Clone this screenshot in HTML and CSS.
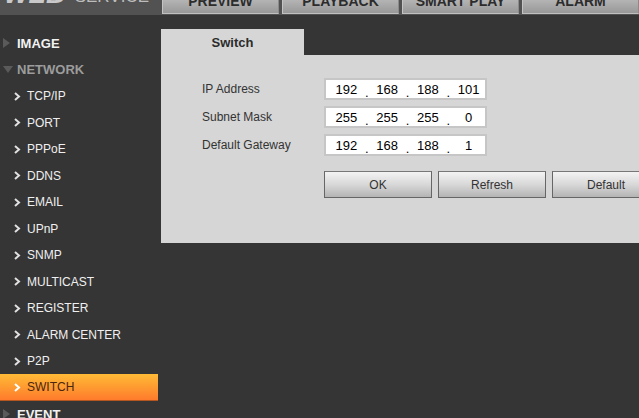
FILE: index.html
```html
<!DOCTYPE html>
<html lang="en">
<head>
    <meta charset="UTF-8">
    <title>WEB SERVICE - Switch</title>
    <link rel="stylesheet" href="styles.css">
</head>
<body>
    <div class="topbar">
        <div class="logo">
            <span class="logo-web">WEB</span>
            <span class="logo-service">SERVICE</span>
        </div>
        <div class="tabs">
            <div class="tab"><span>PREVIEW</span></div>
            <div class="tab"><span>PLAYBACK</span></div>
            <div class="tab"><span>SMART PLAY</span></div>
            <div class="tab"><span>ALARM</span></div>
        </div>
    </div>

    <div class="main">
        <div class="sidebar">
            <div class="menu-head"><span class="arrow-right"></span>IMAGE</div>
            <div class="menu-head open"><span class="arrow-down"></span>NETWORK</div>
            <div class="menu-item"><svg class="chev" width="13" height="10" viewBox="0 0 13 10"><polyline points="1,1 5,4.5 1,8" /></svg>TCP/IP</div>
            <div class="menu-item"><svg class="chev" width="13" height="10" viewBox="0 0 13 10"><polyline points="1,1 5,4.5 1,8" /></svg>PORT</div>
            <div class="menu-item"><svg class="chev" width="13" height="10" viewBox="0 0 13 10"><polyline points="1,1 5,4.5 1,8" /></svg>PPPoE</div>
            <div class="menu-item"><svg class="chev" width="13" height="10" viewBox="0 0 13 10"><polyline points="1,1 5,4.5 1,8" /></svg>DDNS</div>
            <div class="menu-item"><svg class="chev" width="13" height="10" viewBox="0 0 13 10"><polyline points="1,1 5,4.5 1,8" /></svg>EMAIL</div>
            <div class="menu-item"><svg class="chev" width="13" height="10" viewBox="0 0 13 10"><polyline points="1,1 5,4.5 1,8" /></svg>UPnP</div>
            <div class="menu-item"><svg class="chev" width="13" height="10" viewBox="0 0 13 10"><polyline points="1,1 5,4.5 1,8" /></svg>SNMP</div>
            <div class="menu-item"><svg class="chev" width="13" height="10" viewBox="0 0 13 10"><polyline points="1,1 5,4.5 1,8" /></svg>MULTICAST</div>
            <div class="menu-item"><svg class="chev" width="13" height="10" viewBox="0 0 13 10"><polyline points="1,1 5,4.5 1,8" /></svg>REGISTER</div>
            <div class="menu-item"><svg class="chev" width="13" height="10" viewBox="0 0 13 10"><polyline points="1,1 5,4.5 1,8" /></svg>ALARM CENTER</div>
            <div class="menu-item"><svg class="chev" width="13" height="10" viewBox="0 0 13 10"><polyline points="1,1 5,4.5 1,8" /></svg>P2P</div>
            <div class="menu-item active"><svg class="chev" width="13" height="10" viewBox="0 0 13 10"><polyline points="1,1 5,4.5 1,8" /></svg>SWITCH</div>
            <div class="menu-head"><span class="arrow-right"></span>EVENT</div>
        </div>

        <div class="panel">
            <div class="panel-tabs">
                <div class="panel-tab">Switch</div>
            </div>
            <div class="panel-body">
                <div class="form-row">
                    <label>IP Address</label>
                    <div class="ip-box">
                        <span class="seg">192</span><span class="dot">.</span><span class="seg">168</span><span class="dot">.</span><span class="seg">188</span><span class="dot">.</span><span class="seg">101</span>
                    </div>
                </div>
                <div class="form-row">
                    <label>Subnet Mask</label>
                    <div class="ip-box">
                        <span class="seg">255</span><span class="dot">.</span><span class="seg">255</span><span class="dot">.</span><span class="seg">255</span><span class="dot">.</span><span class="seg">0</span>
                    </div>
                </div>
                <div class="form-row">
                    <label>Default Gateway</label>
                    <div class="ip-box">
                        <span class="seg">192</span><span class="dot">.</span><span class="seg">168</span><span class="dot">.</span><span class="seg">188</span><span class="dot">.</span><span class="seg">1</span>
                    </div>
                </div>
                <div class="buttons">
                    <button class="btn">OK</button>
                    <button class="btn">Refresh</button>
                    <button class="btn">Default</button>
                </div>
            </div>
        </div>
    </div>
</body>
</html>
```

FILE: styles.css
```css
* {
    margin: 0;
    padding: 0;
    box-sizing: border-box;
}

html, body {
    overflow: hidden;
}

body {
    font-family: "Liberation Sans", Arial, sans-serif;
    background: #353535;
    width: 639px;
    height: 418px;
}

/* top bar (scrolled so only the lower part shows) */
.topbar {
    height: 15px;
    background: #525252;
    display: flex;
    overflow: hidden;
}

.logo {
    width: 162px;
    flex-shrink: 0;
    display: flex;
    align-items: flex-end;
    gap: 10px;
    padding-left: 4px;
    margin-top: -19px;
    height: 26px;
}

.logo-web {
    font-size: 26px;
    font-weight: bold;
    font-style: italic;
    color: #c9c9c9;
    letter-spacing: 0;
    line-height: 25px;
}

.logo-service {
    font-size: 17px;
    color: #bdbdbd;
    line-height: 21px;
}

.tabs {
    display: flex;
    gap: 3px;
    height: 14px;
}

.tab {
    width: 117px;
    height: 14px;
    background: linear-gradient(#b4b4b4, #989898);
    border-left: 1px solid #c4c4c4;
    border-right: 1px solid #8a8a8a;
    border-bottom: 1px solid #c0c0c0;
    color: #2c2c2c;
    font-size: 14px;
    font-weight: bold;
    text-align: center;
    overflow: hidden;
}

.tab span {
    display: block;
    line-height: 14px;
    margin-top: -6px;
}

/* layout */
.main {
    display: flex;
}

.sidebar {
    width: 161px;
    flex-shrink: 0;
    padding-top: 14.75px;
}

.menu-head, .menu-item {
    height: 26.5px;
    display: flex;
    align-items: center;
    width: 158px;
}

.menu-head {
    font-size: 13px;
    font-weight: bold;
    color: #f2f2f2;
    padding-left: 3px;
}

.menu-head.open {
    color: #9c9c9c;
}

.arrow-right {
    width: 0;
    height: 0;
    border-top: 5px solid transparent;
    border-bottom: 5px solid transparent;
    border-left: 7px solid #5a5a5a;
    margin-right: 7px;
}

.arrow-down {
    width: 0;
    height: 0;
    border-left: 5px solid transparent;
    border-right: 5px solid transparent;
    border-top: 7px solid #5a5a5a;
    margin-right: 4px;
}

.menu-item {
    font-size: 12px;
    color: #f0f0f0;
    padding-left: 14px;
}

.chev {
    flex-shrink: 0;
    margin-top: 1px;
}

.chev polyline {
    fill: none;
    stroke: #e0e0e0;
    stroke-width: 2;
}

.menu-item.active {
    background: linear-gradient(#ffbb36, #ff7b2c);
    border-bottom: 1px solid #b3561f;
    color: #4a2612;
}

.menu-item.active .chev polyline {
    stroke: #fff;
}

/* content panel */
.panel {
    margin-top: 14px;
    width: 478px;
    flex-shrink: 0;
}

.panel-tabs {
    height: 26px;
    display: flex;
}

.panel-tab {
    width: 143px;
    background: #d6d6d6;
    font-size: 13px;
    font-weight: bold;
    color: #2c2c2c;
    text-align: center;
    line-height: 27px;
}

.panel-body {
    background: #d6d6d6;
    height: 188px;
    padding: 23px 0 0 41px;
}

.form-row {
    display: flex;
    align-items: center;
    height: 22px;
    margin-bottom: 6px;
}

.form-row label {
    width: 122px;
    font-size: 12px;
    color: #333;
}

.ip-box {
    width: 163px;
    height: 22px;
    background: #fff;
    border: 2px solid #c6c6c6;
    display: flex;
    align-items: center;
    padding-left: 4px;
    font-size: 13px;
    color: #000;
}

.seg {
    width: 33px;
    text-align: center;
}

.dot {
    width: 8px;
    text-align: center;
    padding-top: 6px;
}

.buttons {
    display: flex;
    gap: 6px;
    margin-left: 122px;
    margin-top: 15px;
}

.btn {
    width: 108px;
    height: 27px;
    flex-shrink: 0;
    border: 1px solid #666;
    border-top-color: #777;
    background: linear-gradient(#f3f3f3, #d8d8d8 50%, #b4b4b4);
    font-family: "Liberation Sans", Arial, sans-serif;
    font-size: 12px;
    color: #333;
}
```
